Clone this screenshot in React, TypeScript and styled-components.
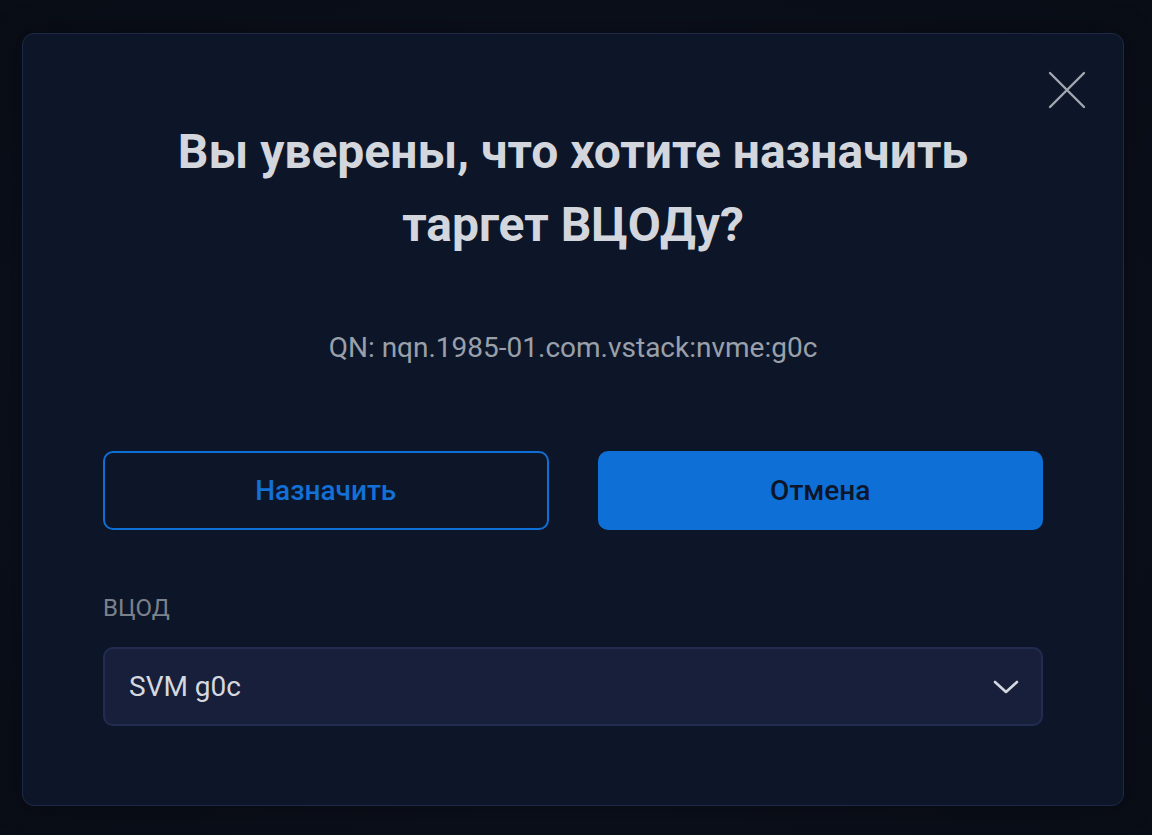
import React from 'react'
import styled, { createGlobalStyle } from 'styled-components'

const GlobalStyle = createGlobalStyle`
  html, body {
    margin: 0;
    padding: 0;
    background: #0b0f1a;
    font-family: Roboto, 'Noto Sans', 'Liberation Sans', sans-serif;
  }
  * { box-sizing: border-box; }
`;

const Page = styled.div`
    width: 1152px;
    height: 835px;
    padding: 33px 28px 29px 22px;
    background: radial-gradient(ellipse at center, #111827 0%, #0b0f1a 70%, #090d16 100%);
`;

const Modal = styled.div`
    position: relative;
    width: 1102px;
    height: 773px;
    background: #0d1629;
    border: 1px solid #1d2947;
    border-radius: 12px;
    padding: 81px 80px 0 80px;
    display: flex;
    flex-direction: column;
    box-shadow: 0 0 30px rgba(0, 0, 0, 0.35);
`;

const CloseButton = styled.button`
    position: absolute;
    top: 34px;
    right: 34px;
    width: 44px;
    height: 44px;
    padding: 0;
    border: none;
    background: transparent;
    cursor: pointer;
    display: flex;
    align-items: center;
    justify-content: center;
`;

const Title = styled.h2`
    margin: 0 auto;
    max-width: 820px;
    font-size: 48px;
    font-weight: 700;
    line-height: 73px;
    color: #d3d6dc;
    text-align: center;
`;

const Qn = styled.div`
    margin-top: 70px;
    font-size: 28px;
    line-height: 34px;
    color: #9aa0aa;
    text-align: center;
`;

const Buttons = styled.div`
    margin-top: 86px;
    display: grid;
    grid-template-columns: 1fr 1fr;
    gap: 49px;
`;

const Button = styled.button<{ $primary?: boolean }>`
    height: 79px;
    border-radius: 10px;
    font-family: inherit;
    font-size: 28px;
    font-weight: 500;
    cursor: pointer;
    border: 2px solid #0e6fd6;
    background: ${p => (p.$primary ? '#0e6fd6' : 'transparent')};
    color: ${p => (p.$primary ? '#0d1629' : '#1270d6')};
`;

const Label = styled.div`
    margin-top: 64px;
    font-size: 24px;
    line-height: 28px;
    color: #7b818c;
`;

const Select = styled.div`
    margin-top: 25px;
    height: 79px;
    border-radius: 10px;
    background: #171f3b;
    border: 2px solid #212c50;
    display: flex;
    align-items: center;
    justify-content: space-between;
    padding: 0 22px 0 24px;
    font-size: 28px;
    color: #d5d8de;
    cursor: pointer;
`;

const App: React.FC = () => {
    return (
        <>
            <GlobalStyle />
            <Page>
                <Modal>
                    <CloseButton aria-label="Закрыть">
                        <svg width="38" height="38" viewBox="0 0 38 38">
                            <path d="M2 2 L36 36 M36 2 L2 36" stroke="#a3a7af" strokeWidth="2.4" strokeLinecap="round" />
                        </svg>
                    </CloseButton>
                    <Title>Вы уверены, что хотите назначить таргет ВЦОДу?</Title>
                    <Qn>QN: nqn.1985-01.com.vstack:nvme:g0c</Qn>
                    <Buttons>
                        <Button>Назначить</Button>
                        <Button $primary>Отмена</Button>
                    </Buttons>
                    <Label>ВЦОД</Label>
                    <Select>
                        <span>SVM g0c</span>
                        <svg width="26" height="16" viewBox="0 0 26 16">
                            <path d="M2 3 L13 13 L24 3" stroke="#d5d8de" strokeWidth="2.6" fill="none" strokeLinecap="round" strokeLinejoin="round" />
                        </svg>
                    </Select>
                </Modal>
            </Page>
        </>
    );
};

export default App;
